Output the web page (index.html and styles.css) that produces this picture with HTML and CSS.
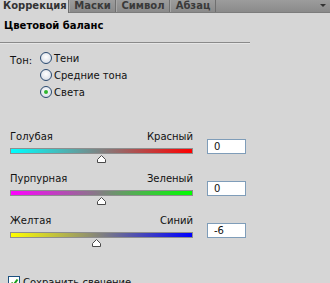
FILE: index.html
```html
<!DOCTYPE html>
<html>
<head>
<meta charset="utf-8">
<link rel="stylesheet" href="styles.css">
</head>
<body>
<div class="panel">
  <div class="tabs">
    <div class="tab active">Коррекция</div>
    <div class="tab w-masks">Маски</div>
    <div class="tab w-symbol">Символ</div>
    <div class="tab w-para">Абзац</div>
    <div class="tab-fill"><span class="menu-arrow"></span></div>
  </div>
  <div class="title">Цветовой баланс</div>
  <div class="sep"></div>
  <div class="tone">
    <div class="tone-label">Тон:</div>
    <div class="radios">
      <div class="radio-row"><span class="radio"></span><span>Тени</span></div>
      <div class="radio-row"><span class="radio"></span><span>Средние тона</span></div>
      <div class="radio-row"><span class="radio checked"></span><span>Света</span></div>
    </div>
  </div>
  <div class="sliders">
    <div class="slider">
      <div class="slider-main">
        <div class="labels"><span>Голубая</span><span>Красный</span></div>
        <div class="track cr"></div>
        <div class="thumb-row"><svg class="thumb" style="margin-left:87px" width="9" height="8" viewBox="0 0 9 8"><polygon points="0.5,7.5 0.5,4.5 4.5,0.5 8.5,4.5 8.5,7.5" fill="#fff" stroke="#4a4a4a"/></svg></div>
      </div>
      <div class="value">0</div>
    </div>
    <div class="slider">
      <div class="slider-main">
        <div class="labels"><span>Пурпурная</span><span>Зеленый</span></div>
        <div class="track mg"></div>
        <div class="thumb-row"><svg class="thumb" style="margin-left:87px" width="9" height="8" viewBox="0 0 9 8"><polygon points="0.5,7.5 0.5,4.5 4.5,0.5 8.5,4.5 8.5,7.5" fill="#fff" stroke="#4a4a4a"/></svg></div>
      </div>
      <div class="value">0</div>
    </div>
    <div class="slider">
      <div class="slider-main">
        <div class="labels"><span>Желтая</span><span>Синий</span></div>
        <div class="track yb"></div>
        <div class="thumb-row"><svg class="thumb" style="margin-left:82px" width="9" height="8" viewBox="0 0 9 8"><polygon points="0.5,7.5 0.5,4.5 4.5,0.5 8.5,4.5 8.5,7.5" fill="#fff" stroke="#4a4a4a"/></svg></div>
      </div>
      <div class="value">-6</div>
    </div>
  </div>
  <div class="preserve">
    <span class="check"><svg width="9" height="9" viewBox="0 0 9 9"><path d="M1.5 4.5 L3.5 7 L7.5 1.5" fill="none" stroke="#1aa01a" stroke-width="2"/></svg></span>
    <span>Сохранить свечение</span>
  </div>
</div>
</body>
</html>
```
FILE: styles.css
```css
html, body {
  margin: 0;
  padding: 0;
  background: #d6d6d6;
  overflow: hidden;
}
.panel {
  width: 330px;
  height: 283px;
  font-family: "DejaVu Sans", Tahoma, sans-serif;
  font-size: 10px;
  color: #111;
}
.tabs {
  display: flex;
  height: 12px;
  background: linear-gradient(#9c9c9c, #8a8a8a);
  border-bottom: 1px solid #7c7c7c;
}
.tab {
  font-weight: bold;
  font-size: 10px;
  line-height: 12px;
  color: #3a3a3a;
  text-align: center;
  border-right: 1px solid #6f6f6f;
  border-left: 1px solid #a8a8a8;
  box-sizing: border-box;
}
.tab.active {
  background: #d6d6d6;
  color: #333;
  width: 69px;
  text-align: left;
  padding-left: 3px;
  border-left: none;
  height: 13px;
}
.w-masks { width: 47px; }
.w-symbol { width: 54px; }
.w-para { width: 46px; }
.tab-fill {
  flex: 1;
  position: relative;
}
.menu-arrow {
  position: absolute;
  right: 4px;
  top: 4px;
  width: 0;
  height: 0;
  border-left: 3px solid transparent;
  border-right: 3px solid transparent;
  border-top: 3px solid #333;
}
.title {
  font-weight: bold;
  font-size: 10px;
  padding: 7px 0 0 4px;
  height: 14px;
  color: #000;
}
.sep {
  width: 250px;
  height: 1px;
  background: #8a8a8a;
  margin-top: 8px;
  border-bottom: 1px solid #e6e6e6;
}
.tone {
  display: flex;
  padding: 8px 0 0 10px;
}
.tone-label {
  width: 30px;
  padding-top: 3px;
}
.radios {
  display: flex;
  flex-direction: column;
  gap: 5px;
}
.radio-row {
  display: flex;
  align-items: center;
  height: 12px;
  gap: 2px;
}
.radio {
  border-radius: 50%;
  border: 1px solid #2a4a70;
  background: radial-gradient(circle at 50% 40%, #fff, #d3d9e3 90%);
  position: relative;
  display: inline-block;
  box-sizing: border-box;
  width: 12px;
  height: 12px;
}
.radio.checked::after {
  content: "";
  position: absolute;
  left: 3px;
  top: 3px;
  width: 4px;
  height: 4px;
  border-radius: 50%;
  background: #2fb52f;
}
.sliders {
  padding: 33px 0 0 10px;
  display: flex;
  flex-direction: column;
  gap: 10px;
}
.slider {
  display: flex;
  align-items: flex-start;
}
.slider-main {
  width: 183px;
}
.labels {
  display: flex;
  justify-content: space-between;
  height: 12px;
  line-height: 12px;
}
.track {
  height: 4px;
  margin-top: 5px;
  border: 1px solid #8e8e8e;
}
.cr { background: linear-gradient(to right, #00ffff, #808080, #ff0000); }
.mg { background: linear-gradient(to right, #ff00ff, #808080, #00ff00); }
.yb { background: linear-gradient(to right, #ffff00, #808080, #0000ff); }
.thumb-row {
  height: 9px;
  display: flex;
}
.thumb {
  display: block;
  margin-top: 1px;
}
.value {
  margin: 8px 0 0 14px;
  width: 31px;
  height: 13px;
  background: #fff;
  border: 1px solid #7f9db9;
  line-height: 13px;
  padding-left: 6px;
}
.preserve {
  display: flex;
  align-items: center;
  gap: 3px;
  padding: 29px 0 0 8px;
}
.check {
  width: 10px;
  height: 10px;
  border: 1px solid #1c5180;
  background: #fff;
  display: flex;
  align-items: center;
  justify-content: center;
}
```
